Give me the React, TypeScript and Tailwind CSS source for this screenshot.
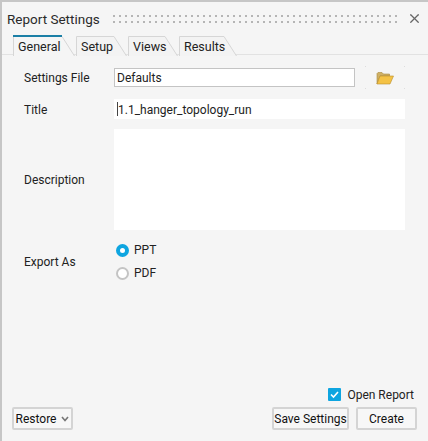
import React from "react";
import { X } from "lucide-react";

const font = "font-['Roboto',Arial,sans-serif]";

function Tab({ label, width, active }: { label: string; width: number; active?: boolean }) {
  return (
    <div className="relative h-[20px] shrink-0" style={{ width }}>
      <svg className="absolute inset-0" width={width} height={21} viewBox={`0 0 ${width} 21`}>
        <path
          d={`M0.5 21V1.5H${width - 13}L${width - 0.5} 21`}
          fill={active ? "#f5f5f5" : "#f3f3f3"}
          stroke="#d6d6d6"
        />
        {active && <path d={`M0 1H${width - 13}`} stroke="#1b7fa6" strokeWidth="2" />}
      </svg>
      <span className="absolute top-[3px] left-[5px] text-[12.5px] text-[#222]">{label}</span>
    </div>
  );
}

function Radio({ label, checked }: { label: string; checked?: boolean }) {
  return (
    <div className="flex items-center gap-[5px] h-[14px]">
      {checked ? (
        <span className="w-[13px] h-[13px] rounded-full border-[4px] border-[#0ea5e0] bg-white" />
      ) : (
        <span className="w-[13px] h-[13px] rounded-full border-2 border-[#c4c4c4] bg-white" />
      )}
      <span className="text-[12px] text-[#222]">{label}</span>
    </div>
  );
}

function Btn({ children, width }: { children: React.ReactNode; width: number }) {
  return (
    <button
      className="h-[23px] pt-px flex items-center justify-center whitespace-nowrap border-2 border-[#d4d4d4] rounded-[2px] bg-[#f7f7f7] text-[12.5px] text-[#111]"
      style={{ width }}
    >
      {children}
    </button>
  );
}

function FolderButton() {
  return (
    <div className="relative w-[40px] h-[23px] -my-[2px] flex items-center justify-center">
      <span className="absolute top-0 left-0 w-px h-px bg-[#ddd]" />
      <span className="absolute top-0 right-0 w-px h-px bg-[#ddd]" />
      <span className="absolute bottom-0 left-0 w-px h-px bg-[#ddd]" />
      <span className="absolute bottom-0 right-0 w-px h-px bg-[#ddd]" />
      <svg width="18" height="14" viewBox="0 0 18 14">
        <path d="M1 13V2.5L2 1.5H6L7.5 3H13.5V5H4L1 13Z" fill="#cfb065" stroke="#a98a3c" strokeWidth="0.6" />
        <path d="M1 13L4 5H17.5L14 13H1Z" fill="#f4c245" stroke="#b98d2c" strokeWidth="0.6" />
      </svg>
    </div>
  );
}

export default function App() {
  return (
    <div className={`w-[428px] h-[441px] bg-[#f5f5f5] border-t-2 border-l-2 border-[#c6c6c6] flex flex-col ${font}`}>
      {/* Title bar */}
      <div className="flex items-center h-[33px] pl-[5px] pr-[6px] shrink-0">
        <span className="w-[104px] text-[13.5px] pt-px text-[#2a2a2a] whitespace-nowrap">Report Settings</span>
        <div className="flex-1 mr-[8px] h-[12px] bg-[radial-gradient(circle,#b5b5b5_1px,transparent_1.2px)] bg-[length:6px_6px]" />
        <X className="w-[15px] h-[15px] text-[#666]" strokeWidth={2} />
      </div>

      {/* Tabs */}
      <div className="flex pl-[11px] gap-px border-b border-[#e2e2e2] h-[20px] shrink-0">
        <Tab label="General" width={62} active />
        <Tab label="Setup" width={51} />
        <Tab label="Views" width={50} />
        <Tab label="Results" width={58} />
      </div>

      {/* Form */}
      <div className="flex-1 flex flex-col pl-[22px] pr-[23px] pt-[13px]">
        <div className="flex items-center h-[19px]">
          <span className="w-[90px] text-[12px] text-[#222]">Settings File</span>
          <div className="w-[241px] h-[19px] bg-white border border-[#c4c4c4] flex items-center pl-[2px] text-[12px] text-[#222]">
            Defaults
          </div>
          <div className="ml-[10px]">
            <FolderButton />
          </div>
        </div>
        <div className="flex items-center h-[20px] mt-[12px]">
          <span className="w-[90px] pt-[2px] text-[12px] text-[#222]">Title</span>
          <div className="relative flex-1 h-[20px] bg-white flex items-center pl-[4px] pt-px text-[12px] text-[#222]">
            <span className="absolute left-[3px] top-[3px] w-px h-[14px] bg-[#444]" />
            1.1_hanger_topology_run
          </div>
        </div>
        <div className="flex items-center h-[101px] mt-[10px]">
          <span className="w-[90px] text-[12px] text-[#222]">Description</span>
          <div className="flex-1 h-full bg-white" />
        </div>
        <div className="flex items-center mt-[13px]">
          <span className="w-[90px] text-[12px] text-[#222]">Export As</span>
          <div className="flex flex-col gap-[9px] ml-[2px]">
            <Radio label="PPT" checked />
            <Radio label="PDF" />
          </div>
        </div>
      </div>

      {/* Footer */}
      <div className="flex justify-end items-center gap-[6px] pr-[14px] h-[13px] shrink-0">
        <span className="w-[13px] h-[13px] bg-[#0ea5e0] flex items-center justify-center rounded-[1px]">
          <svg width="11" height="11" viewBox="0 0 11 11">
            <path d="M2 5.5L4.5 8L9 3" fill="none" stroke="#fff" strokeWidth="1.6" />
          </svg>
        </span>
        <span className="text-[12px] text-[#222]">Open Report</span>
      </div>
      <div className="flex items-center pl-[10px] pr-[11px] mt-[6px] mb-[11px] shrink-0">
        <Btn width={61}>
          <span className="text-[12px]">Restore</span>
          <svg className="ml-[5px]" width="8" height="6" viewBox="0 0 8 6">
            <path d="M1 1L4 4.5L7 1" fill="none" stroke="#777" strokeWidth="1.6" />
          </svg>
        </Btn>
        <div className="ml-auto flex gap-[7px]">
          <Btn width={77}>
            <span className="text-[12px]">Save Settings</span>
          </Btn>
          <Btn width={61}>
            <span className="text-[12px]">Create</span>
          </Btn>
        </div>
      </div>
    </div>
  );
}
